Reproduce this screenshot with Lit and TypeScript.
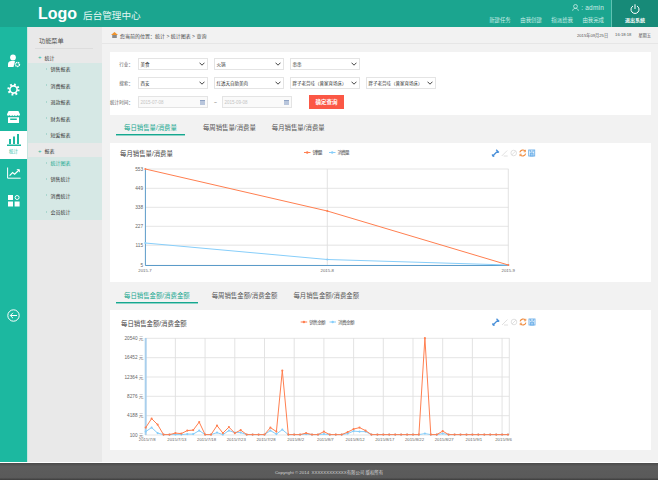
import { LitElement, html, svg, css, unsafeCSS } from "lit";
import { customElement } from "lit/decorators.js";

const FONT = unsafeCSS(`"Liberation Sans", "Noto Sans CJK SC", sans-serif`);

const ORANGE = "#ff7f50";
const BLUE = "#87cefa";

// px above the baseline for the daily chart, read off the picture
const dailySales = [
  7, 16, 10, 0, 0, 1.5, 1, 4, 4.5, 12.5, 0, 0, 9, 1.5, 7.5, 1.5, 4.5, 0, 0, 0, 0, 7, 3, 64, 0, 0, 0,
  1.5, 0, 0, 3, 0, 0, 0, 2.5, 5.5, 7, 4, 0, 0, 0, 0, 0, 0, 0, 0, 0, 96.5, 0, 0, 3.5, 0, 0, 0, 0, 0,
  0, 0, 0, 0, 0, 0,
];
const dailyUse = [
  3, 7, 1.5, 0, 0, 0, 0, 0.5, 0.5, 4, 0, 0, 2, 0, 4, 2, 2, 0, 0, 0, 0, 4, 0.5, 5, 0, 0, 0, 0.5, 0, 0,
  0.5, 0, 0, 0, 1, 3.5, 3, 3, 0, 0, 0, 0, 0, 0, 0, 0, 0, 1, 0, 0, 1, 0, 0, 0, 0, 0, 0, 0, 0, 0, 0, 0,
];

const line = (pts: number[][], color: string, dot: number) => svg`
  <polyline points=${pts.map((p) => p.join(",")).join(" ")} fill="none" stroke=${color} stroke-width="1"></polyline>
  ${pts.map((p) => svg`<circle cx=${p[0]} cy=${p[1]} r=${dot} fill=${color}></circle>`)}
`;

// echarts style toolbox, x is the left icon centre
const toolbox = (x: number, y: number) => svg`
  <g fill="none" stroke-width="0.9">
    <g transform="translate(${x} ${y})" stroke="#4a90d9">
      <path d="M-3 3 L2 -2 M0.5 -3.2 L3.2 -0.5 M-3 3 L-3.4 1.4 M-3 3 L-1.4 3.4" stroke-width="1.3"></path>
    </g>
    <g transform="translate(${x + 9} ${y})" stroke="#dcdcdc">
      <path d="M-3 3 L2.5 -2.5 M-1 3 L3 3"></path>
    </g>
    <g transform="translate(${x + 18} ${y})" stroke="#dcdcdc">
      <circle r="2.8"></circle><path d="M-2 2 L2 -2"></path>
    </g>
    <g transform="translate(${x + 27} ${y})" stroke="#f08a3c">
      <path d="M-2.9 -0.6 A3 3 0 0 1 2.4 -1.8 M2.9 0.6 A3 3 0 0 1 -2.4 1.8" stroke-width="1.1"></path>
      <path d="M2.8 -3.2 V-1.2 H0.9 M-2.8 3.2 V1.2 H-0.9" stroke-width="0.8"></path>
    </g>
    <g transform="translate(${x + 36} ${y})" stroke="#6aaee8">
      <rect x="-3" y="-3" width="6" height="6"></rect><rect x="-1.4" y="0.2" width="2.8" height="2.8" fill="#a8d0f2"></rect>
      <path d="M-1.4 -3 V-1 H1.4 V-3"></path>
    </g>
  </g>
`;

const legend = (x: number, y: number, w: number, label: string, color: string) => svg`
  <path d="M${x} ${y} h6.5" stroke=${color} stroke-width="1"></path>
  <circle cx=${x + 3.2} cy=${y} r="1.2" fill=${color}></circle>
  <text class="legend" x=${x + 8.5} y=${y + 1.6} textLength=${w}>${label}</text>
`;

@customElement("app-root")
export class AppRoot extends LitElement {
  static styles = css`
    :host {
      display: flex;
      flex-direction: column;
      width: 658px;
      height: 480px;
      overflow: hidden;
      font-family: ${FONT};
      color: #444;
      background: #f2f2f2;
    }
    .top {
      height: 27px;
      flex: none;
      display: flex;
      align-items: center;
      background: #1ba58f;
      color: #fff;
      padding-left: 38px;
    }
    .logo {
      font-size: 16px;
      font-weight: 700;
      line-height: 27px;
    }
    .app-name {
      font-size: 9.6px;
      margin-left: 6px;
      margin-top: 2px;
      color: #e6f7f3;
    }
    .top-right {
      margin-left: auto;
      display: flex;
      flex-direction: column;
      align-items: flex-end;
      gap: 6px;
      padding-right: 7px;
      color: #cfeee8;
    }
    .admin {
      display: flex;
      align-items: center;
      gap: 2px;
      font-size: 6.5px;
      line-height: 7px;
      letter-spacing: 0.2px;
    }
    .quick {
      display: flex;
      gap: 9.5px;
      font-size: 5.4px;
      line-height: 7px;
    }
    .logout {
      width: 47px;
      height: 27px;
      flex: none;
      box-sizing: border-box;
      border-left: 1px solid #5fc2b2;
      background: #178a78;
      display: flex;
      flex-direction: column;
      align-items: center;
      justify-content: center;
      gap: 2px;
      font-size: 5px;
      font-weight: 700;
    }
    .body {
      flex: 1;
      min-height: 0;
      display: flex;
    }
    .rail {
      width: 27px;
      flex: none;
      background: #1cb8a0;
      display: flex;
      flex-direction: column;
      align-items: center;
      padding-top: 20px;
    }
    .rail-item {
      width: 100%;
      height: 28px;
      display: flex;
      flex-direction: column;
      align-items: center;
      justify-content: center;
      color: #fff;
    }
    .rail-item.active {
      background: #fff;
      color: #1cb8a0;
      font-size: 4.5px;
      height: 27.5px;
      box-sizing: border-box;
      padding-bottom: 2px;
      gap: 1.5px;
    }
    .rail-back {
      margin-top: auto;
      margin-bottom: 140px;
      color: #fff;
      height: 14px;
    }
    .menu {
      width: 75px;
      flex: none;
      background: #e9e9e9;
      border-left: 1px solid #c8e6e0;
      box-sizing: border-box;
      font-size: 5px;
      color: #333;
    }
    .menu-title {
      margin: 0 9px 0 7px;
      padding: 9px 0 3px 4px;
      height: 9px;
      font-size: 6.2px;
      line-height: 9px;
      color: #555;
      border-bottom: 1px solid #ddd;
    }
    .group {
      height: 14px;
      box-sizing: border-box;
      display: flex;
      align-items: center;
      gap: 3px;
      padding: 2px 0 0 10px;
    }
    .plus {
      color: #1cb8a0;
      font-size: 6px;
    }
    .sub {
      background: #d6e8e5;
      width: 74px;
      overflow: hidden;
    }
    .sub-item {
      height: 16.4px;
      display: flex;
      align-items: center;
      gap: 3.5px;
      padding-left: 18px;
    }
    .sub-item:first-child {
      margin-top: -2.3px;
    }
    .sub-item::before {
      content: "";
      width: 0;
      height: 0;
      border-left: 1.5px solid #7fc4b8;
      border-top: 1.5px solid transparent;
      border-bottom: 1.5px solid transparent;
    }
    .sub-item.on {
      color: #16a78f;
    }
    .main {
      flex: 1;
      min-width: 0;
      display: flex;
      flex-direction: column;
    }
    .crumb {
      height: 17px;
      flex: none;
      box-sizing: border-box;
      display: flex;
      align-items: center;
      gap: 2px;
      padding: 0 7px 0 9px;
      border-bottom: 1px solid #e6e6e6;
      font-size: 5px;
      color: #444;
    }
    .clock {
      margin-left: auto;
      display: flex;
      gap: 7px;
      font-size: 4.2px;
      color: #555;
    }
    .content {
      padding: 8px 7px 0 8px;
    }
    .filter {
      background: #fff;
      height: 63px;
      box-sizing: border-box;
      padding-top: 6px;
      display: flex;
      flex-direction: column;
      gap: 7px;
    }
    .row {
      display: flex;
      gap: 6px;
      align-items: center;
      height: 12px;
    }
    .row-label {
      width: 23px;
      margin-right: -1px;
      text-align: right;
      font-size: 4.6px;
      color: #555;
      white-space: nowrap;
    }
    .ctl {
      width: 70px;
      height: 12px;
      box-sizing: border-box;
      border: 1px solid #e4e4e4;
      display: flex;
      align-items: center;
      justify-content: space-between;
      padding: 0 2px 0 1.5px;
      font-size: 4.5px;
      color: #333;
      white-space: nowrap;
      overflow: hidden;
    }
    .ctl.date {
      color: #c4c4c4;
      background: #fafafa;
    }
    .cal {
      width: 5px;
      height: 5px;
      background: #b9c6dc;
      border-top: 1px solid #8fa3c4;
      box-sizing: border-box;
    }
    .tilde {
      width: 2px;
      font-size: 5px;
      color: #888;
    }
    .go {
      margin-left: 11px;
      width: 35px;
      height: 14px;
      display: flex;
      align-items: center;
      justify-content: center;
      background: #fb5745;
      color: #fff;
      font-size: 5.5px;
      font-weight: 700;
    }
    .tabs {
      height: 28px;
      box-sizing: border-box;
      display: flex;
      align-items: flex-start;
      font-size: 6.4px;
      color: #555;
      padding: 5px 0 0 6px;
    }
    .tabs.money {
      padding-top: 6px;
    }
    .tab {
      height: 15px;
      box-sizing: border-box;
      display: flex;
      align-items: center;
      padding: 0 8px;
      white-space: nowrap;
    }
    .tab.on {
      color: #16a78f;
      border-bottom: 1px solid #16a78f;
      box-shadow: 0 1px 0 #8ed4c8;
      margin-right: 10px;
    }
    .money .tab.on {
      margin-right: 6px;
    }
    .chart {
      display: block;
      background: #fff;
      width: 541px;
    }
    .chart text {
      font-family: ${FONT};
    }
    .chart .title {
      font-size: 6.4px;
      fill: #444;
    }
    .chart .legend {
      font-size: 4.6px;
      fill: #555;
    }
    .chart .tick {
      font-size: 4.3px;
      fill: #666;
    }
    .chart .tick.val {
      font-size: 4.7px;
    }
    .foot {
      height: 18px;
      flex: none;
      box-sizing: border-box;
      border-top: 1px solid #fff;
      background: linear-gradient(#4a4a4a, #5c5c5c 20%, #5a5a5a 85%, #3d3d3d);
      color: #d4d4d4;
      font-size: 4.4px;
      display: flex;
      align-items: center;
      justify-content: center;
    }
  `;

  private filterRow(label: string, opts: string[]) {
    return html`
      <div class="row">
        <span class="row-label">${label}</span>
        ${opts.map(
          (o) => html`<div class="ctl"><span>${o}</span>
            <svg width="6" height="4" viewBox="0 0 6 4"><path d="M.5 .7 3 3.2 5.5 .7" fill="none" stroke="#444" stroke-width="1"></path></svg>
          </div>`
        )}
      </div>
    `;
  }

  private monthChart() {
    const ys = [169, 188.3, 207.3, 226.3, 245.3, 265.3];
    const labels = ["553", "449", "338", "227", "115", "5"];
    return html`
      <svg class="chart" width="541" height="139" viewBox="110 143 541 139">
        <text class="title" x="120" y="155.5">每月销售量/消费量</text>
        ${legend(304, 152.5, 10, "销售量", ORANGE)} ${legend(329, 152.5, 12, "消费量", BLUE)}
        ${toolbox(495.7, 153)}
        ${ys.map((y, i) => svg`
          <path d="M145 ${y} H508.5" stroke=${i === 4 ? "#ececec" : "#e2e2e2"} stroke-width=${i === 4 ? 1.5 : 0.9}></path>
          <text class="tick val" x="143" y=${y + 1.7} text-anchor="end">${labels[i]}</text>
        `)}
        <path d="M327.3 169 V265 M508.3 169 V265" stroke="#e0e0e0" stroke-width="0.9"></path>
        <path d="M145.4 169 V265.5 H508" fill="none" stroke="#5b9bc9" stroke-width="1"></path>
        ${line([[145.3, 243], [327.3, 259.5], [508.3, 265]], BLUE, 1)}
        ${line([[145.3, 169], [327.3, 211], [508.3, 265]], ORANGE, 1)}
        ${[[145, "2015-7"], [327.3, "2015-8"], [508.3, "2015-9"]].map(
          ([x, t]) => svg`<text class="tick" x=${x} y="271.5" text-anchor="middle">${t}</text>`
        )}
      </svg>
    `;
  }

  private dayChart() {
    const ys = [338.3, 357.7, 377, 396.3, 415.7, 435];
    const labels = ["20540 元", "16452 元", "12364 元", "8276 元", "4188 元", "100 元"];
    const days = ["7/8", "7/13", "7/18", "7/23", "7/28", "8/2", "8/7", "8/12", "8/17", "8/22", "8/27", "9/1", "9/6"];
    const x0 = 145.7;
    const step = 5.94;
    const base = 434.6;
    const pts = (a: number[]) => a.map((h, i) => [+(x0 + i * step).toFixed(1), base - h]);
    return html`
      <svg class="chart" width="541" height="140" viewBox="110 310 541 140">
        <text class="title" x="121" y="325.5">每日销售金额/消费金额</text>
        ${legend(300.7, 322, 16.5, "销售金额", ORANGE)} ${legend(329.5, 322, 16.5, "消费金额", BLUE)}
        ${toolbox(496, 322)}
        ${ys.map((y, i) => svg`
          <path d="M145 ${y} H509.3" stroke="#e2e2e2" stroke-width="0.9"></path>
          <text class="tick val" x="143.5" y=${y + 1.7} text-anchor="end">${labels[i]}</text>
        `)}
        ${days.slice(1).map((_, i) => {
          const x = x0 + (i + 1) * 29.7;
          return svg`<path d="M${x} 338 V435" stroke="#e0e0e0" stroke-width="0.9"></path>`;
        })}
        <path d="M509.3 338 V435" stroke="#e0e0e0" stroke-width="0.9"></path>
        <path d="M145.7 338 V435" stroke="#a9cfec" stroke-width="2"></path>
        ${line(pts(dailyUse), BLUE, 1.05)} ${line(pts(dailySales), ORANGE, 1.05)}
        ${days.map((d, i) => svg`<text class="tick" x=${x0 + 1.5 + i * 29.7} y="441" text-anchor="middle">2015/${d}</text>`)}
      </svg>
    `;
  }

  render() {
    return html`
      <div class="top">
        <span class="logo">Logo</span>
        <span class="app-name">后台管理中心</span>
        <div class="top-right">
          <div class="admin">
            <svg width="7" height="7" viewBox="0 0 7 7" fill="none" stroke="#dff5f0" stroke-width=".7">
              <circle cx="3.5" cy="2.4" r="1.9"></circle><path d="M.6 6.8C1 5 2 4.4 3.5 4.4S6 5 6.4 6.8"></path>
            </svg>
            <span>: admin</span>
          </div>
          <div class="quick"><span>新建任务</span><span>由我创建</span><span>指派给我</span><span>由我完成</span></div>
        </div>
        <div class="logout">
          <svg width="10" height="10" viewBox="0 0 10 10" fill="none" stroke="#fff" stroke-width="1">
            <path d="M3 2A4 4 0 1 0 7 2M5 .3V5"></path>
          </svg>
          <span>退出系统</span>
        </div>
      </div>
      <div class="body">
        <nav class="rail">
          <div class="rail-item">
            <svg width="14" height="14" viewBox="0 0 14 14" fill="currentColor">
              <circle cx="6" cy="3.4" r="2.9"></circle>
              <path d="M1 13V10C1 8 3 6.8 6 6.8 7 6.8 7.6 7 8 7.2L6.5 13Z"></path>
              <circle cx="10.4" cy="10.4" r="2" fill="none" stroke="currentColor" stroke-width="1.5" stroke-dasharray="1.3 .5"></circle>
            </svg>
          </div>
          <div class="rail-item">
            <svg width="13" height="13" viewBox="0 0 13 13" fill="none" stroke="currentColor">
              <circle cx="6.5" cy="6.5" r="3.6" stroke-width="1.6"></circle>
              <circle cx="6.5" cy="6.5" r="5" stroke-width="2.2" stroke-dasharray="1.8 2.1"></circle>
            </svg>
          </div>
          <div class="rail-item">
            <svg width="13" height="12" viewBox="0 0 13 12" fill="currentColor">
              <path d="M1.6 0H11.4L13 3.2C13 5.2 10.8 5.2 10.4 4 10 5.2 8 5.2 7.8 4 7.4 5.2 5.6 5.2 5.2 4 5 5.2 3 5.2 2.6 4 2.2 5.2 0 5.2 0 3.2Z"></path>
              <path d="M1 6.2H12V12H1ZM3.2 7.6V9H9.8V7.6Z" fill-rule="evenodd"></path>
            </svg>
          </div>
          <div class="rail-item active">
            <svg width="14" height="12" viewBox="0 0 14 12" fill="currentColor">
              <path d="M2 5H4V10H2ZM6 2.5H8V10H6ZM10 0H12V10H10ZM0 10.6H14V12H0Z"></path>
            </svg>
            <span>统计</span>
          </div>
          <div class="rail-item">
            <svg width="14" height="12" viewBox="0 0 14 12" fill="none" stroke="currentColor" stroke-width="1">
              <path d="M.6 .5V11.2H13.6"></path><path d="M2.6 8.6 5.6 5.6 7.6 7.2 12 3" stroke-width="1.2"></path>
              <path d="M9.8 2.6H12.4V5.2" stroke-width=".9"></path>
            </svg>
          </div>
          <div class="rail-item">
            <svg width="12" height="12" viewBox="0 0 12 12" fill="currentColor">
              <path d="M0 0H5V5H0ZM0 6.6H5V11.6H0ZM6.6 6.6H11.6V11.6H6.6Z"></path>
              <circle cx="9.1" cy="2.5" r="2" fill="none" stroke="currentColor" stroke-width="1"></circle>
            </svg>
          </div>
          <div class="rail-back">
            <svg width="13" height="13" viewBox="0 0 13 13" fill="none" stroke="currentColor" stroke-width="1">
              <circle cx="6.5" cy="6.5" r="5.7"></circle><path d="M10 6.5H3.4M6 3.8 3.3 6.5 6 9.2"></path>
            </svg>
          </div>
        </nav>
        <aside class="menu">
          <div class="menu-title">功能菜单</div>
          <div class="group"><span class="plus">+</span>统计</div>
          <div class="sub">
            ${["销售报表", "消费报表", "退款报表", "财务报表", "短爱报表"].map((t) => html`<div class="sub-item">${t}</div>`)}
          </div>
          <div class="group"><span class="plus">+</span>报表</div>
          <div class="sub">
            <div class="sub-item on">统计图表</div>
            ${["销售统计", "消费统计", "会员统计"].map((t) => html`<div class="sub-item">${t}</div>`)}
          </div>
        </aside>
        <main class="main">
          <div class="crumb">
            <svg width="7" height="6" viewBox="0 0 7 6">
              <path d="M0 3 3.5 0 7 3Z" fill="#f0932b"></path><path d="M1.2 3H5.8V6H1.2Z" fill="#8a8a8a"></path>
            </svg>
            <span>您当前的位置：统计 &gt; 统计图表 &gt; 查询</span>
            <span class="clock"><span>2015年09月25日</span><span>16:18:18</span><span>星期五</span></span>
          </div>
          <div class="content">
            <section class="filter">
              ${this.filterRow("行业：", ["美食", "火锅", "串串"])}
              ${this.filterRow("搜索：", ["西安", "红透天自助美肉", "胖子老劳哇（曾家育场床）", "胖子老劳哇（曾家育场床）"])}
              <div class="row">
                <span class="row-label">统计时间：</span>
                <div class="ctl date"><span>2015-07-08</span><span class="cal"></span></div>
                <span class="tilde">~</span>
                <div class="ctl date"><span>2015-09-08</span><span class="cal"></span></div>
                <div class="go">确定查询</div>
              </div>
            </section>
            <div class="tabs">
              <span class="tab on">每日销售量/消费量</span>
              <span class="tab">每周销售量/消费量</span>
              <span class="tab">每月销售量/消费量</span>
            </div>
            ${this.monthChart()}
            <div class="tabs money">
              <span class="tab on">每日销售金额/消费金额</span>
              <span class="tab">每周销售金额/消费金额</span>
              <span class="tab">每月销售金额/消费金额</span>
            </div>
            ${this.dayChart()}
          </div>
        </main>
      </div>
      <footer class="foot">Copyright © 2014 &nbsp;XXXXXXXXXXXX有限公司 版权所有</footer>
    `;
  }
}
